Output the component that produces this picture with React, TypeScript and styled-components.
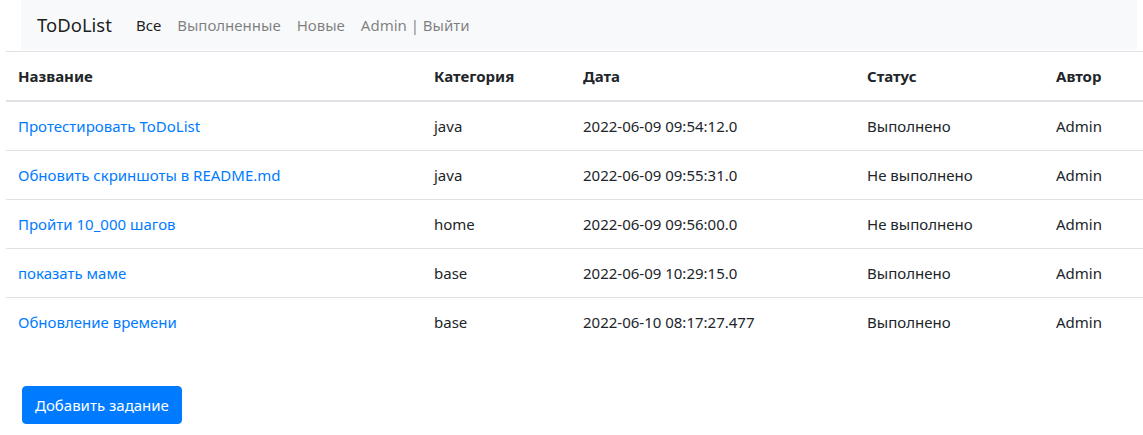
import React from "react";
import styled, { createGlobalStyle } from "styled-components";

const Global = createGlobalStyle`
  html, body { margin: 0; padding: 0; background: #fff; }
  body {
    font-family: "Noto Sans", "Open Sans", sans-serif;
    font-size: 15px;
    line-height: 24px;
    color: #212529;
  }
  * { box-sizing: border-box; }
`;

const Page = styled.div`
  display: flex;
  flex-direction: column;
  padding-left: 6px;
`;

const NavWrap = styled.div`
  padding: 0 6px 0 15px;
`;

const Navbar = styled.nav`
  display: flex;
  align-items: center;
  height: 50px;
  padding: 0 16px;
  background: #f8f9fa;
  margin-bottom: 1px;
`;

const Brand = styled.a`
  font-size: 18.5px;
  line-height: 30px;
  color: rgba(0, 0, 0, 0.9);
  text-decoration: none;
  margin-right: 16px;
`;

const NavList = styled.div`
  display: flex;
  align-items: center;
`;

const NavLink = styled.a<{ $active?: boolean }>`
  padding: 8px;
  color: ${(p) => (p.$active ? "rgba(0,0,0,0.9)" : "rgba(0,0,0,0.5)")};
  text-decoration: none;
`;

const Table = styled.table`
  width: 100%;
  border-collapse: collapse;
  margin-bottom: 40px;
`;

const Th = styled.th<{ $w?: number }>`
  text-align: left;
  font-weight: 700;
  padding: 12px;
  vertical-align: bottom;
  border-top: 1px solid #dee2e6;
  border-bottom: 2px solid #dee2e6;
  width: ${(p) => (p.$w ? `${p.$w}px` : "auto")};
`;

const Td = styled.td`
  padding: 12px;
  border-top: 1px solid #dee2e6;
  vertical-align: top;
`;

const TaskLink = styled.a`
  color: #007bff;
  text-decoration: none;
`;

const Button = styled.button`
  align-self: flex-start;
  margin-left: 16px;
  font-family: inherit;
  font-size: 15px;
  line-height: 24px;
  padding: 6px 12px;
  color: #fff;
  background: #007bff;
  border: 1px solid #007bff;
  border-radius: 4px;
  cursor: pointer;
`;

const rows = [
  ["Протестировать ToDoList", "java", "2022-06-09 09:54:12.0", "Выполнено", "Admin"],
  ["Обновить скриншоты в README.md", "java", "2022-06-09 09:55:31.0", "Не выполнено", "Admin"],
  ["Пройти 10_000 шагов", "home", "2022-06-09 09:56:00.0", "Не выполнено", "Admin"],
  ["показать маме", "base", "2022-06-09 10:29:15.0", "Выполнено", "Admin"],
  ["Обновление времени", "base", "2022-06-10 08:17:27.477", "Выполнено", "Admin"],
];

export default function App() {
  return (
    <>
      <Global />
      <Page>
        <NavWrap>
          <Navbar>
            <Brand href="#">ToDoList</Brand>
            <NavList>
              <NavLink $active href="#">Все</NavLink>
              <NavLink href="#">Выполненные</NavLink>
              <NavLink href="#">Новые</NavLink>
              <NavLink href="#">Admin | Выйти</NavLink>
            </NavList>
          </Navbar>
        </NavWrap>
        <Table>
          <thead>
            <tr>
              <Th $w={416}>Название</Th>
              <Th $w={149}>Категория</Th>
              <Th $w={284}>Дата</Th>
              <Th $w={189}>Статус</Th>
              <Th>Автор</Th>
            </tr>
          </thead>
          <tbody>
            {rows.map((r) => (
              <tr key={r[0]}>
                <Td><TaskLink href="#">{r[0]}</TaskLink></Td>
                <Td>{r[1]}</Td>
                <Td>{r[2]}</Td>
                <Td>{r[3]}</Td>
                <Td>{r[4]}</Td>
              </tr>
            ))}
          </tbody>
        </Table>
        <Button>Добавить задание</Button>
      </Page>
    </>
  );
}
